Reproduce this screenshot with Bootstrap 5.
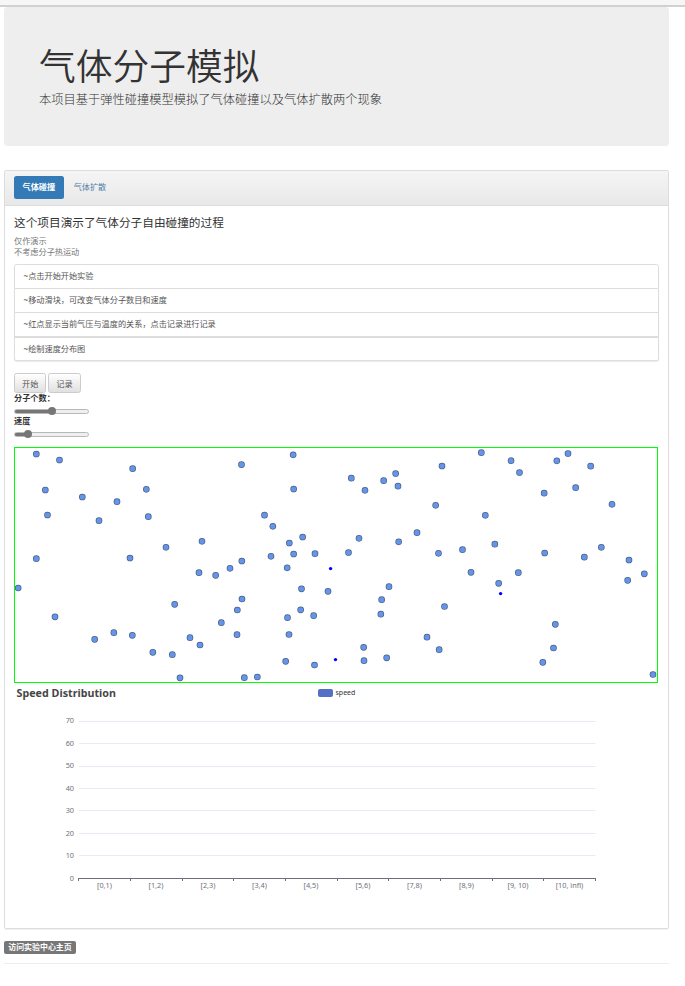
<!DOCTYPE html>
<html lang="zh-CN">
<head>
<meta charset="utf-8">
<meta name="viewport" content="width=device-width, initial-scale=1">
<title>气体分子模拟</title>
<link href="https://cdn.jsdelivr.net/npm/bootstrap@5.3.0/dist/css/bootstrap.min.css" rel="stylesheet">
<style>
body{font-family:"Noto Sans","Noto Sans CJK SC",sans-serif;font-size:8.17px;line-height:11.67px;color:#333;background:#fff;overflow:hidden}
.topstrip{height:7px;background:#f6f6f6;border-bottom:2px solid #d1d1d1}
.page{width:665px;margin-left:4px}
.hero{height:139px;background:#eee;border-radius:3.5px;padding:38px 35px 0}
.hero h1{font-family:"Noto Sans CJK SC",sans-serif;font-size:36.75px;font-weight:350;line-height:38px;margin:0}
.hero p{font-family:"Noto Sans CJK SC",sans-serif;font-size:12.25px;font-weight:300;line-height:18px;margin:7px 0 0}
.panel{height:759px;margin-top:24px;border:1px solid #ddd;border-radius:2px;box-shadow:0 1px 1px rgba(0,0,0,.06)}
.panel-top{height:35px;padding:5px 9px;border-bottom:1px solid #ddd;border-radius:0;background:linear-gradient(#f5f5f5,#e8e8e8);gap:1.5px}
.panel-top .nav-link{height:23px;line-height:22px;padding:0 8.5px;border-radius:2.5px;color:#5180a8}
.panel-top .nav-link.active{background:#337ab7;color:#fff;font-weight:700}
.panel-body{padding:8px 9px 0}
.panel-body h4{font-family:"Noto Sans CJK SC",sans-serif;font-size:11.67px;font-weight:400;line-height:16px;margin:0}
.note{color:#777;line-height:11px;margin:5px 0 0}
.steps{width:645px;margin-top:7px;border-radius:2.5px;box-shadow:0 1px 1px rgba(0,0,0,.08)}
.steps .list-group-item{height:24px;padding:0 8.5px;line-height:22px;color:#555;border-color:#ddd}
.steps .list-group-item:first-child{height:25px}
.steps .list-group-item:last-child{height:25px;line-height:21px;border-top:2px solid #ddd;margin-top:-1px}
.btn-old{height:20px;padding:0 7px;font-size:8.17px;line-height:17px;border:1px solid #ccc;border-radius:2.5px;color:#555;background:linear-gradient(#fff,#e0e0e0)}
.tools{margin-top:12px;gap:2px}
.fld{height:11px;line-height:10px;font-weight:700;color:#333}
.form-range{width:75px;height:8px;margin:3px 0 1px;--v:50%}
.form-range.slow{--v:18%}
.form-range::-webkit-slider-runnable-track{height:5px;border:1px solid #b8b8b8;border-radius:3px;background:linear-gradient(to right,#767676 var(--v),#efefef var(--v))}
.form-range::-webkit-slider-thumb{width:8px;height:8px;margin-top:-2.5px;background:#767676;border:0}
.arena{margin-top:9px}
.axis-text{font-size:7.3px;fill:#6e7079}
.home-tag{height:13px;line-height:12px;width:72px;padding:0;font-size:7.95px;border-radius:2px;background:#777!important;margin-top:12px}
.endline{margin:9px 0 0;border-top:1px solid #eee;opacity:1}
</style>
</head>
<body>
<div class="topstrip"></div>
<main class="page">
<header class="hero"><h1>气体分子模拟</h1><p>本项目基于弹性碰撞模型模拟了气体碰撞以及气体扩散两个现象</p></header>
<section class="panel">
<ul class="panel-top nav nav-pills flex-row">
<li class="nav-item"><a class="nav-link active" href="#">气体碰撞</a></li>
<li class="nav-item"><a class="nav-link" href="#">气体扩散</a></li>
</ul>
<div class="panel-body">
<h4>这个项目演示了气体分子自由碰撞的过程</h4>
<p class="note">仅作演示<br>不考虑分子热运动</p>
<ul class="list-group steps">
<li class="list-group-item">~点击开始开始实验</li>
<li class="list-group-item">~移动滑块，可改变气体分子数目和速度</li>
<li class="list-group-item">~红点显示当前气压与温度的关系，点击记录进行记录</li>
<li class="list-group-item">~绘制速度分布图</li>
</ul>
<div class="tools d-flex"><button class="btn btn-old">开始</button><button class="btn btn-old">记录</button></div>
<label class="fld d-block" for="count">分子个数：</label>
<input class="form-range d-block" id="count" type="range" value="50">
<label class="fld d-block" for="speed">速度</label>
<input class="form-range slow d-block" id="speed" type="range" value="14">
<svg class="arena d-block" width="644" height="236" viewBox="14 447 644 236">
<defs>
<g id="gas">
<path transform="translate(0 440) scale(.33333)" d="M109 42h0M178.500 60h0M398 86h0M136 150h0M439 148h0M247 171h0M351 185h0M142.500 225h0M297 242h0M445 230h0M606 304h0M498 322h0M109 356h0M390 354h0M597 398h0M647 406h0M54.500 444h0M524 493h0M165 530.500h0M664 548h0M341.500 578h0M397 586h0M284 598h0M570 593h0M600 615h0M458.500 637h0M517 644h0M540 713.500h0"/>
<path transform="translate(225 440) scale(.33333)" d="M49.500 74h0M204.500 44.500h0M651 78h0M379 114.500h0M420 151h0M476 122h0M512 100.500h0M519 138.500h0M206 147h0M632 196h0M118.500 225.500h0M143.500 259h0M193 309h0M233 291h0M402 295h0M521 305.500h0M576 278h0M50.500 363h0M15 385h0M138 349h0M206 342h0M186.500 383.500h0M270 341h0M370.500 337.500h0M640.500 340h0M51 477h0M37 510h0M229.500 446.500h0M309 454h0M492 440h0M470 479h0M187.500 533h0M227 509.500h0M266 527h0M467.500 522.500h0M658.500 499.500h0M36 584h0M192 583.500h0M606 591.500h0M416 622h0M642.500 629h0M182 664h0M268.500 675h0M417 662h0M485 653.500h0M58 713h0M97 711h0"/>
<path transform="translate(450 440) scale(.33333)" d="M94 38h0M183 62h0M208.500 97.500h0M320.500 62.500h0M354 40.500h0M422 78.500h0M282.500 159.500h0M377 143h0M486 193h0M106 226h0M37.500 329h0M134.500 312.500h0M284 339h0M403 351.500h0M454 322h0M537 360h0M63 397h0M205 398h0M146 430h0M583 401.500h0M533 421h0M316 553h0M310.500 624h0M278.500 667h0M609 703.500h0"/>
</g>
</defs>
<g stroke-linecap="round" fill="none">
<use href="#gas" stroke="#4c6080" stroke-width="20"/>
<use href="#gas" stroke="#6495ed" stroke-width="15.500"/>
</g>
<g fill="#00f"><circle cx="330.600" cy="568.600" r="1.700"/><circle cx="335.500" cy="659.600" r="1.700"/><circle cx="500.600" cy="593.600" r="1.700"/></g>
<rect x="14.500" y="447.500" width="643" height="235" fill="none" stroke="#0f0"/>
</svg>
<svg class="d-block" width="644" height="233" viewBox="14 683 644 233" font-family="Noto Sans, sans-serif">
<text x="16.500" y="697" font-size="10.700" font-weight="700" fill="#464646" textLength="99.500">Speed Distribution</text>
<rect x="318" y="689" width="15" height="8" rx="2" fill="#5470c6"/>
<text x="335.500" y="695" font-size="7" fill="#333">speed</text>
<path stroke="#e9ebf4" d="M79 721.500H595.500M79 743.500H595.500M79 766.500H595.500M79 788.500H595.500M79 810.500H595.500M79 833.500H595.500M79 855.500H595.500"/>
<path stroke="#6e7079" fill="none" d="M78 878.500H596M78.500 878v3M130.500 878v3M182.500 878v3M233.500 878v3M285.500 878v3M337.500 878v3M388.500 878v3M440.500 878v3M492.500 878v3M543.500 878v3M595.500 878v3"/>
<g class="axis-text" text-anchor="end"><text x="74" y="723">70</text><text x="74" y="745.500">60</text><text x="74" y="768">50</text><text x="74" y="790.500">40</text><text x="74" y="812.500">30</text><text x="74" y="835.500">20</text><text x="74" y="857.500">10</text><text x="74" y="880.500">0</text></g>
<g class="axis-text" text-anchor="middle"><text x="104.500" y="888">[0,1)</text><text x="156" y="888">[1,2)</text><text x="208" y="888">[2,3)</text><text x="259.500" y="888">[3,4)</text><text x="311" y="888">[4,5)</text><text x="363" y="888">[5,6)</text><text x="414.500" y="888">[7,8)</text><text x="466.500" y="888">[8,9)</text><text x="518" y="888">[9, 10)</text><text x="569.500" y="888">[10, infi)</text></g>
</svg>
</div>
</section>
<div class="d-flex"><span class="badge home-tag">访问实验中心主页</span></div>
<hr class="endline">
</main>
<script src="https://cdn.jsdelivr.net/npm/bootstrap@5.3.0/dist/js/bootstrap.bundle.min.js"></script>
</body>
</html>
